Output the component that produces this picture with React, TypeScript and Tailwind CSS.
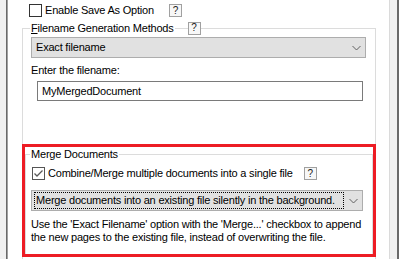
import React from "react";

const line = "bg-[#dcdcdc]";

function Help() {
  return (
    <div className="w-[13px] h-[13px] border border-[#a0a0a0] bg-[#f7f7f7] flex items-center justify-center text-[10px] leading-none text-[#202020] shrink-0 tracking-normal">
      ?
    </div>
  );
}

function Check({ checked }: { checked?: boolean }) {
  return (
    <div
      className={
        "w-[13px] h-[13px] border bg-white shrink-0 flex items-center justify-center " +
        (checked ? "border-[#555555]" : "border-[#333333]")
      }
    >
      {checked && (
        <svg width="11" height="11" viewBox="0 0 11 11">
          <path d="M1.5 5.5 L4 8 L9.5 2.5" fill="none" stroke="#5a5a5a" strokeWidth="1.3" />
        </svg>
      )}
    </div>
  );
}

function Chevron() {
  return (
    <svg width="9" height="6" viewBox="0 0 9 6" className="shrink-0">
      <path d="M0.5 1 L4.5 5 L8.5 1" fill="none" stroke="#606060" strokeWidth="1" />
    </svg>
  );
}

export default function App() {
  return (
    <div
      className="relative w-[399px] h-[259px] overflow-hidden flex bg-white text-[11px] text-black tracking-[-0.2px]"
      style={{ fontFamily: '"Liberation Sans", Arial, sans-serif' }}
    >
      <div className="w-[6px] bg-[#f0f0f0]" />
      <div className="w-px bg-[#696969]" />
      <div className="w-px bg-[#a0a0a0]" />
      <div className="w-[381px] flex flex-col">
        {/* Enable Save As Option */}
        <div className="flex items-center h-[13px] mt-[4px] pl-[21px]">
          <Check />
          <span className="ml-[3px] leading-[13px] whitespace-nowrap">Enable Save As Option</span>
          <div className="ml-[15px]">
            <Help />
          </div>
        </div>

        {/* Group box 1 */}
        <div className="ml-[14px] w-[354px] mt-[5px] flex flex-col">
          <div className="flex items-center h-[12px]">
            <div className="w-[8px] h-[6px] self-end border-l border-t border-[#dcdcdc]" />
            <span className="px-[1px] leading-[12px] whitespace-nowrap">
              <span className="underline">F</span>ilename Generation Methods
            </span>
            <div className={"w-[13px] h-px " + line} />
            <Help />
            <div className="flex-1 h-[6px] self-end border-t border-r border-[#dcdcdc]" />
          </div>
          <div className="border-x border-[#dcdcdc] h-[300px] flex flex-col">
            <div className="ml-[8px] mt-[3px] w-[335px] h-[21px] border border-[#adadad] bg-[#e1e1e1] flex items-center pl-[4px] pr-[4px]">
              <span className="flex-1 leading-[13px]">Exact filename</span>
              <Chevron />
            </div>
            <div className="ml-[8px] mt-[6px] leading-[13px]">Enter the filename:</div>
            <div className="ml-[14px] mt-[4px] w-[326px] h-[20px] border border-[#7a7a7a] bg-white flex items-center pl-[4px]">
              <span className="leading-[13px]">MyMergedDocument</span>
            </div>

            {/* Merge group */}
            <div className="ml-[2px] mt-[47px] w-[348px] flex flex-col">
              <div className="flex items-center h-[12px]">
                <div className="w-[5px] h-[6px] self-end border-l border-t border-[#dcdcdc]" />
                <span className="px-[1px] leading-[12px] whitespace-nowrap">Merge Documents</span>
                <div className="flex-1 h-[6px] self-end border-t border-r border-[#dcdcdc]" />
              </div>
              <div className="border-x border-b border-[#dcdcdc] h-[96px] flex flex-col">
                <div className="flex items-center h-[13px] mt-[7px] ml-[6px]">
                  <Check checked />
                  <span className="ml-[3px] leading-[13px] whitespace-nowrap">
                    Combine/Merge multiple documents into a single file
                  </span>
                  <div className="ml-[11px]">
                    <Help />
                  </div>
                </div>
                <div className="ml-[5px] mt-[10px] w-[332px] h-[21px] border border-[#adadad] bg-[#e1e1e1] flex items-center pl-[2px] pr-[4px]">
                  <span className="w-[310px] h-[17px] border border-dotted border-black flex items-center pl-[1px] leading-[13px] whitespace-nowrap overflow-hidden">
                    Merge documents into an existing file silently in the background.
                  </span>
                  <div className="flex-1 flex justify-end">
                    <Chevron />
                  </div>
                </div>
                <div className="ml-[5px] mt-[7px] leading-[13px] whitespace-nowrap">
                  Use the 'Exact Filename' option with the 'Merge...' checkbox to append
                  <br />
                  the new pages to the existing file, instead of overwriting the file.
                </div>
              </div>
            </div>
          </div>
        </div>
      </div>
      <div className="w-px bg-[#dadada]" />
      <div className="w-[7px] bg-[#f0f0f0]" />
      <div className="w-[2px] bg-[#696969]" />

      <div className="absolute left-[22px] top-[144px] w-[354px] h-[113px] border-[3px] border-[#ed1c24] pointer-events-none" />
    </div>
  );
}
